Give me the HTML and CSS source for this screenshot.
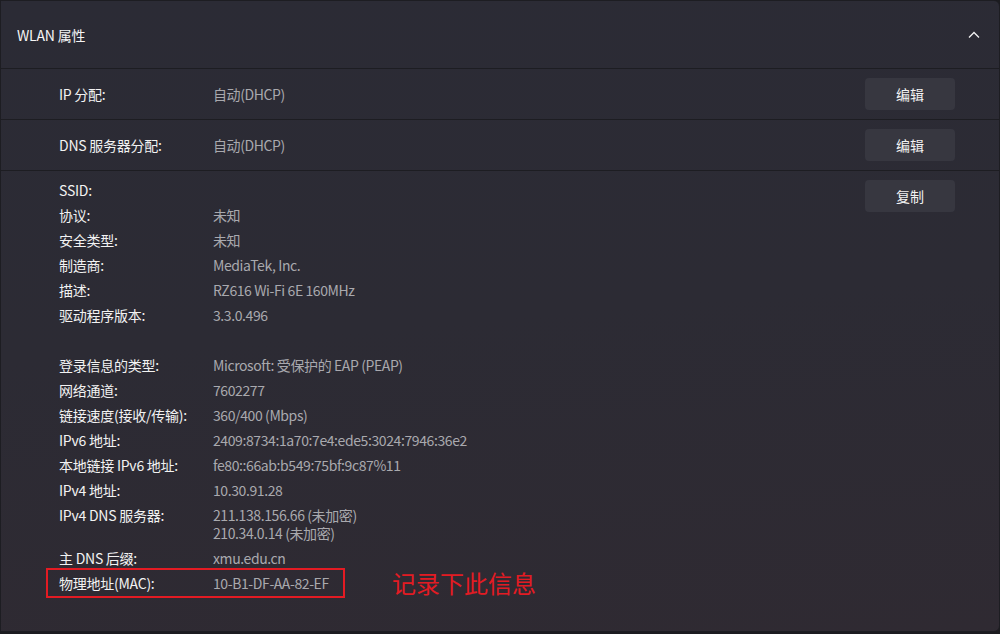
FILE: index.html
```html
<!DOCTYPE html>
<html>
<head>
    <title>WLAN 属性</title>
    <link rel="stylesheet" href="styles.css">
</head>
<body>
    <div class="panel">
        <div class="panel-head">
            <span class="title">WLAN 属性</span>
            <svg class="chevron" width="12" height="8" viewBox="0 0 12 8">
                <polyline points="1,6.5 6,1.5 11,6.5" fill="none" stroke="#f2f2f2" stroke-width="1.3"/>
            </svg>
        </div>

        <div class="row">
            <span class="label">IP 分配:</span>
            <span class="value">自动(DHCP)</span>
            <button class="btn">编辑</button>
        </div>

        <div class="row">
            <span class="label">DNS 服务器分配:</span>
            <span class="value">自动(DHCP)</span>
            <button class="btn">编辑</button>
        </div>

        <div class="details">
            <div class="lists">
                <div class="group">
                    <div class="item"><span class="label">SSID:</span><span class="value"></span></div>
                    <div class="item"><span class="label">协议:</span><span class="value">未知</span></div>
                    <div class="item"><span class="label">安全类型:</span><span class="value">未知</span></div>
                    <div class="item"><span class="label">制造商:</span><span class="value">MediaTek, Inc.</span></div>
                    <div class="item"><span class="label">描述:</span><span class="value">RZ616 Wi-Fi 6E 160MHz</span></div>
                    <div class="item"><span class="label">驱动程序版本:</span><span class="value">3.3.0.496</span></div>
                </div>
                <div class="group">
                    <div class="item"><span class="label">登录信息的类型:</span><span class="value">Microsoft: 受保护的 EAP (PEAP)</span></div>
                    <div class="item"><span class="label">网络通道:</span><span class="value">7602277</span></div>
                    <div class="item"><span class="label">链接速度(接收/传输):</span><span class="value">360/400 (Mbps)</span></div>
                    <div class="item"><span class="label">IPv6 地址:</span><span class="value">2409:8734:1a70:7e4:ede5:3024:7946:36e2</span></div>
                    <div class="item"><span class="label">本地链接 IPv6 地址:</span><span class="value">fe80::66ab:b549:75bf:9c87%11</span></div>
                    <div class="item"><span class="label">IPv4 地址:</span><span class="value">10.30.91.28</span></div>
                    <div class="item"><span class="label">IPv4 DNS 服务器:</span><span class="value">211.138.156.66 (未加密)<br>210.34.0.14 (未加密)</span></div>
                    <div class="item"><span class="label">主 DNS 后缀:</span><span class="value">xmu.edu.cn</span></div>
                    <div class="item mac">
                        <span class="label">物理地址(MAC):</span><span class="value">10-B1-DF-AA-82-EF</span>
                        <span class="mark"></span>
                        <span class="note">记录下此信息</span>
                    </div>
                </div>
            </div>
            <button class="btn">复制</button>
        </div>
    </div>
</body>
</html>
```

FILE: styles.css
```css
* {
    margin: 0;
    padding: 0;
    box-sizing: border-box;
}

body {
    background: #1c1c20;
    font-family: "Noto Sans CJK SC", "Noto Sans", sans-serif;
    font-size: 14px;
    color: #f2f2f2;
}

.panel {
    width: 1000px;
    height: 632px;
    border: 1px solid #1d1d22;
    border-radius: 0 6px 6px 0;
    background: linear-gradient(175deg, #2b2b35 0%, #2c2b34 50%, #2f2a32 100%);
    overflow: hidden;
}

.panel-head {
    height: 67px;
    display: flex;
    justify-content: space-between;
    align-items: center;
    padding: 0 19px 0 16px;
}

.title {
    font-size: 14px;
    color: #f5f5f5;
    letter-spacing: -0.2px;
}

.row {
    height: 51px;
    border-top: 1px solid #1d1d22;
    display: grid;
    grid-template-columns: 154px 1fr auto;
    align-items: center;
    padding: 0 44px 0 58px;
}

.label {
    color: #f2f2f2;
    letter-spacing: -0.25px;
}

.value {
    color: #a9a9ae;
    letter-spacing: -0.4px;
}

.btn {
    width: 90px;
    height: 32px;
    border: none;
    border-radius: 4px;
    background: #373740;
    color: #f2f2f2;
    font-family: inherit;
    font-size: 14px;
}

.details {
    border-top: 1px solid #1d1d22;
    display: flex;
    justify-content: space-between;
    align-items: flex-start;
    padding: 9px 44px 0 58px;
}

.lists {
    padding-top: 1px;
}

.group {
    display: flex;
    flex-direction: column;
    gap: 7px;
}

.group + .group {
    margin-top: 32px;
}

.item {
    display: grid;
    grid-template-columns: 154px auto;
    line-height: 18px;
}

.mac {
    position: relative;
}

.mark {
    position: absolute;
    left: -13px;
    top: -6px;
    width: 299px;
    height: 30px;
    border: 2px solid #e31b23;
}

.note {
    position: absolute;
    left: 333px;
    top: -6px;
    font-size: 24px;
    line-height: 30px;
    color: #e31b23;
    white-space: nowrap;
}
```
